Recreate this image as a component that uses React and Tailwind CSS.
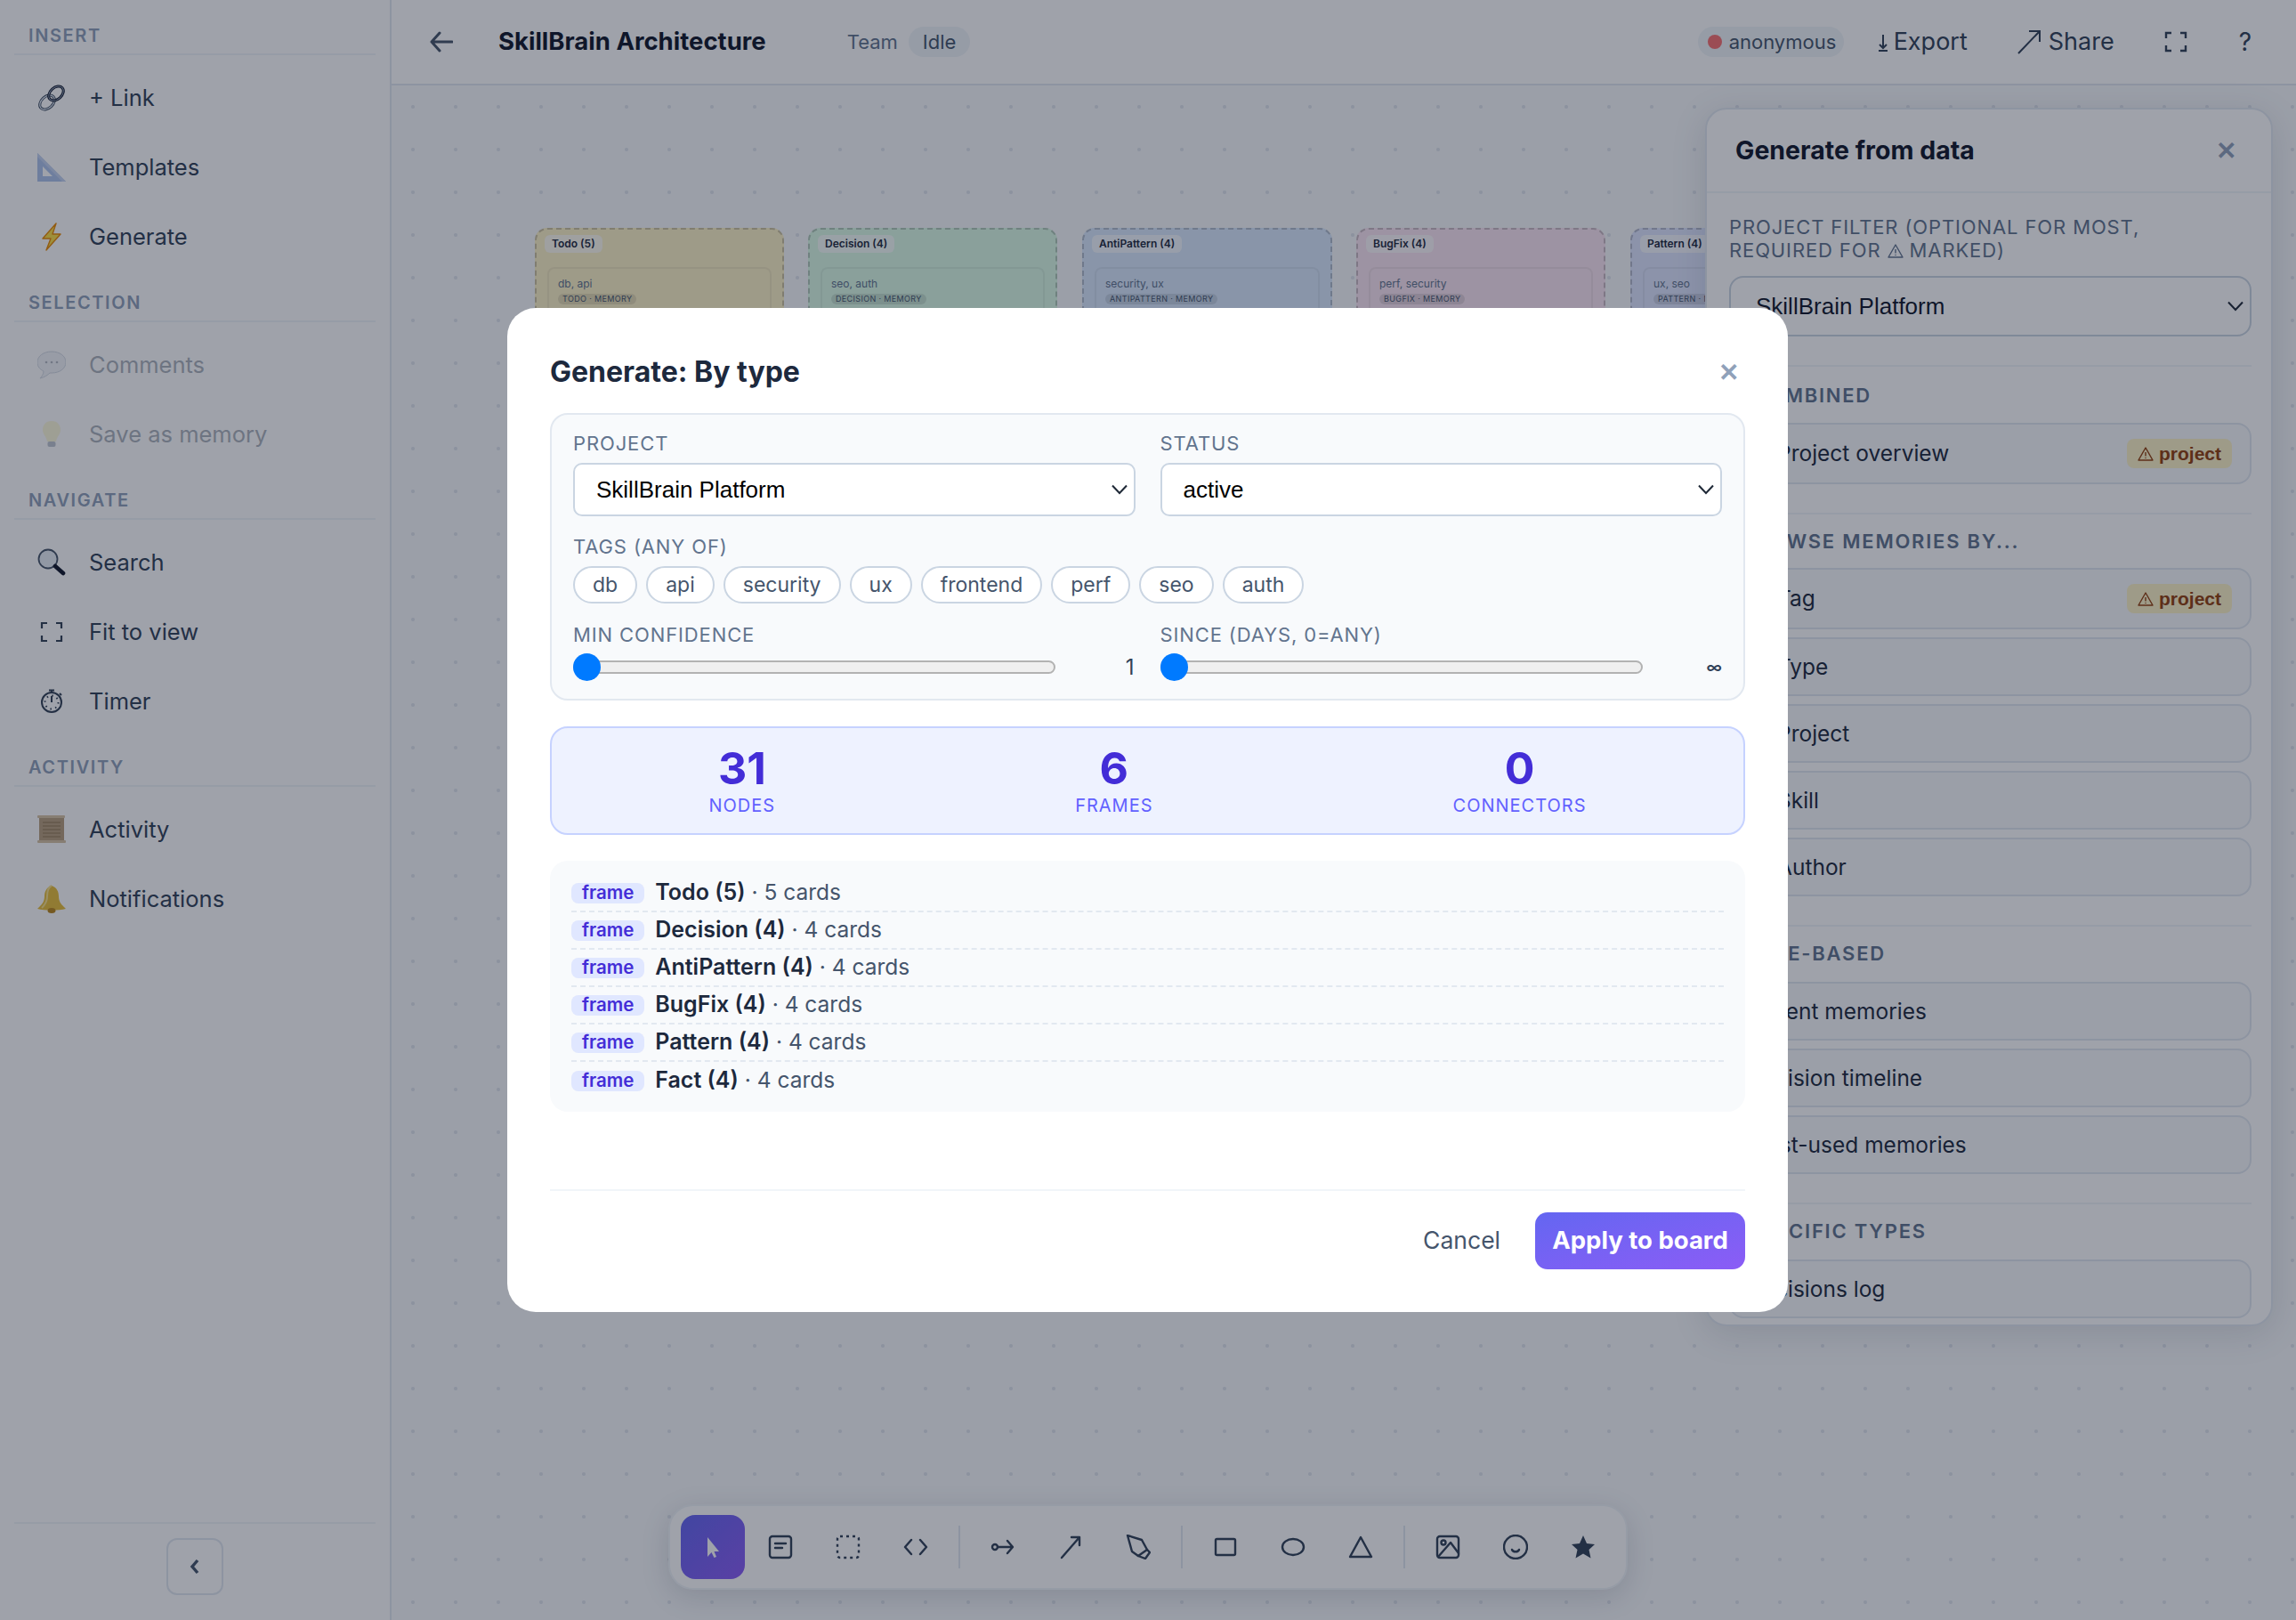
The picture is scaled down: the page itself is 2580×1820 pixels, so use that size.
import { useState } from 'react'

const Stroke = ({ children, size = 28 }) => (
  <svg width={size} height={size} viewBox="0 0 28 28" fill="none" stroke="currentColor" strokeWidth="2.4" strokeLinecap="round" strokeLinejoin="round">
    {children}
  </svg>
)

const LinkEmoji = () => (
  <svg width="32" height="32" viewBox="0 0 32 32" fill="none">
    <ellipse cx="11" cy="21" rx="9.5" ry="6.5" transform="rotate(-42 11 21)" stroke="#334155" strokeWidth="3" />
    <ellipse cx="11" cy="21" rx="9.5" ry="6.5" transform="rotate(-42 11 21)" stroke="#dbe4ee" strokeWidth="1.4" />
    <ellipse cx="21" cy="11" rx="9.5" ry="6.5" transform="rotate(-42 21 11)" stroke="#0f172a" strokeWidth="3" />
    <ellipse cx="21" cy="11" rx="9.5" ry="6.5" transform="rotate(-42 21 11)" stroke="#94a3b8" strokeWidth="1" />
  </svg>
)
const RulerEmoji = () => (
  <svg width="32" height="32" viewBox="0 0 32 32">
    <path fillRule="evenodd" d="M0 0L32 32H0Z M6 15V26H17Z" fill="#aec4ec" />
    <path d="M0 0L32 32H28L0 4Z" fill="#c3d3f0" />
  </svg>
)
const BoltEmoji = () => (
  <svg width="32" height="32" viewBox="0 0 32 32">
    <path d="M21 1L6 18H15L10 31L26 13H17Z" fill="#fde047" stroke="#ea8a04" strokeWidth="1.4" strokeLinejoin="round" />
  </svg>
)
const BubbleEmoji = () => (
  <svg width="32" height="32" viewBox="0 0 32 32">
    <path d="M16 1C7 1 0 6 0 13C0 18 3 21 7 23C7 26 5 29 3 31C8 30 12 27 14 25H16C25 25 32 20 32 13C32 6 25 1 16 1Z" fill="#e2e8f0" stroke="#94a3b8" strokeWidth="1" />
    <circle cx="10" cy="13" r="1.3" fill="#475569" />
    <circle cx="16" cy="13" r="1.3" fill="#475569" />
    <circle cx="22" cy="13" r="1.3" fill="#475569" />
  </svg>
)
const BulbEmoji = () => (
  <svg width="32" height="32" viewBox="0 0 32 32">
    <path d="M16 1C9 1 6 6 6 11C6 16 10 18 11 24H21C22 18 26 16 26 11C26 6 23 1 16 1Z" fill="#fef3a8" />
    <rect x="11.5" y="24" width="9" height="6" rx="2" fill="#64748b" />
  </svg>
)
const SearchEmoji = () => (
  <svg width="32" height="32" viewBox="0 0 32 32" fill="none">
    <circle cx="12" cy="12" r="10.5" fill="#e8eef5" stroke="#475569" strokeWidth="1.8" />
    <path d="M20 20L29 28" stroke="#0f172a" strokeWidth="4.6" strokeLinecap="round" />
  </svg>
)
const FitIcon = () => (
  <svg width="32" height="32" viewBox="0 0 32 32" fill="none" stroke="#334155" strokeWidth="2.2">
    <path d="M11 6H5V12M21 6H27V12M5 20V26H11M27 20V26H21" />
  </svg>
)
const TimerEmoji = () => (
  <svg width="32" height="32" viewBox="0 0 32 32" fill="none" stroke="#334155" strokeWidth="2">
    <circle cx="16" cy="17" r="11" />
    <path d="M16 4V6M13 3.5H19M25 7L27 9" />
    <path d="M16 10V17" />
    <circle cx="16" cy="17" r="7.5" strokeDasharray="1.5 4.4" />
  </svg>
)
const ScrollEmoji = () => (
  <svg width="32" height="32" viewBox="0 0 32 32">
    <rect x="2" y="2" width="28" height="28" fill="#b79f7d" />
    <rect x="0" y="0" width="31" height="3" rx="1" fill="#d8c4a4" />
    <rect x="0" y="28" width="32" height="3" rx="1" fill="#d8c4a4" />
    <path d="M6 8H26M6 12H26M6 16H26M6 20H26M6 24H26" stroke="#8f7654" strokeWidth="1" />
  </svg>
)
const BellEmoji = () => (
  <svg width="32" height="32" viewBox="0 0 32 32">
    <path d="M16 1C10 3 8 8 8 13C8 20 4 23 0 27C8 29 24 29 32 27C28 23 24 20 24 13C24 8 22 3 16 1Z" fill="#e8bf3a" />
    <path d="M16 1C12 3 11 8 11 13C11 19 8 23 5 26" stroke="#f7e08a" strokeWidth="2" fill="none" />
    <ellipse cx="16" cy="29" rx="4.5" ry="3" fill="#b9861c" />
  </svg>
)
const Warn = ({ size = 18 }) => (
  <svg className="inline-block align-[-2px]" width={size} height={size} viewBox="0 0 18 18" fill="none" stroke="currentColor" strokeWidth="1.4" strokeLinejoin="round">
    <path d="M9 2L17 16H1Z" />
    <path d="M9 7V11.5M9 13V14" />
  </svg>
)

const sections = [
  { label: 'Insert', items: [[LinkEmoji, '+ Link'], [RulerEmoji, 'Templates'], [BoltEmoji, 'Generate']] },
  { label: 'Selection', muted: true, items: [[BubbleEmoji, 'Comments'], [BulbEmoji, 'Save as memory']] },
  { label: 'Navigate', items: [[SearchEmoji, 'Search'], [FitIcon, 'Fit to view'], [TimerEmoji, 'Timer']] },
  { label: 'Activity', items: [[ScrollEmoji, 'Activity'], [BellEmoji, 'Notifications']] },
]

const frames = [
  { title: 'Todo (5)', tags: 'db, api', kind: 'TODO · MEMORY', box: 'left-[161px] w-[280px] bg-[#fef3c7]' },
  { title: 'Decision (4)', tags: 'seo, auth', kind: 'DECISION · MEMORY', box: 'left-[468px] w-[280px] bg-[#dcfce7]' },
  { title: 'AntiPattern (4)', tags: 'security, ux', kind: 'ANTIPATTERN · MEMORY', box: 'left-[776px] w-[281px] bg-[#dbeafe]' },
  { title: 'BugFix (4)', tags: 'perf, security', kind: 'BUGFIX · MEMORY', box: 'left-[1084px] w-[280px] bg-[#fce7f3]' },
  { title: 'Pattern (4)', tags: 'ux, seo', kind: 'PATTERN · MEMORY', box: 'left-[1392px] w-[280px] bg-[#e0e7ff]' },
]

const tags = ['db', 'api', 'security', 'ux', 'frontend', 'perf', 'seo', 'auth']

const planned = [
  ['Todo (5)', '5 cards'],
  ['Decision (4)', '4 cards'],
  ['AntiPattern (4)', '4 cards'],
  ['BugFix (4)', '4 cards'],
  ['Pattern (4)', '4 cards'],
  ['Fact (4)', '4 cards'],
]

const Chevron = () => (
  <svg className="absolute right-[8px] top-1/2 -translate-y-1/2 pointer-events-none" width="20" height="12" viewBox="0 0 20 12" fill="none" stroke="#1f2937" strokeWidth="2">
    <path d="M2 1.5L10 10L18 1.5" />
  </svg>
)

function Slider({ value, small }) {
  return (
    <div className="flex items-center h-[31px]">
      <div className="relative w-[542px] h-[31px] flex items-center">
        <div className="w-full h-[15px] rounded-full bg-[#efefef] border-2 border-[#b2b2b2]" />
        <div className="absolute left-0 top-0 w-[31px] h-[31px] rounded-full bg-[#007aff]" />
      </div>
      <span className={`flex-1 text-right text-slate-700 ${small ? 'text-[18px] font-semibold' : 'text-[24px] pr-[1px]'}`}>{value}</span>
    </div>
  )
}

function PanelRow({ children, badge, plain }) {
  return (
    <div className={`flex items-center justify-between pr-[20px] rounded-[16px] border-2 border-slate-200 bg-slate-50 text-[24.5px] text-slate-800 ${plain ? 'pl-[18px]' : 'pl-[52px]'} ${badge ? 'h-[69px]' : 'h-[66px]'}`}>
      <span>{children}</span>
      {badge && (
        <span className="flex items-center gap-[6px] h-[33px] px-[12px] rounded-[8px] bg-[#fef3c7] text-[#92400e] text-[21px] font-bold font-['Liberation_Sans',sans-serif]">
          <Warn />project
        </span>
      )}
    </div>
  )
}

const PanelLabel = ({ children, inset }) => (
  <div className={`h-[24px] leading-[24px] text-[22px] font-semibold tracking-[0.08em] uppercase text-slate-500 ${inset}`}>{children}</div>
)

export default function App() {
  const [active] = useState('select')

  return (
    <div className="relative w-full h-screen overflow-hidden bg-white font-['Inter',sans-serif]">
      <div className="flex h-full">
        <aside className="w-[440px] flex-shrink-0 flex flex-col px-4 pt-[5px] bg-white border-r-2 border-slate-200">
          {sections.map(sec => (
            <div key={sec.label} className="pt-[23px]">
              <div className="h-[34px] pl-4 pb-[8px] leading-[24px] text-[20px] font-semibold tracking-[0.08em] uppercase text-slate-400 border-b-2 border-slate-100">{sec.label}</div>
              <div className="mt-[9px] flex flex-col">
                {sec.items.map(([Icon, label]) => (
                  <div key={label} className={`h-[78px] flex items-center gap-[26px] pl-[26px] text-[25.5px] text-slate-700 ${sec.muted ? 'opacity-40' : ''}`}>
                    <span className="w-[32px] h-[32px] flex items-center justify-center"><Icon /></span>
                    {label}
                  </div>
                ))}
              </div>
            </div>
          ))}
          <div className="mt-auto border-t-2 border-slate-100 pt-[16px] pb-[28px] flex justify-center">
            <button className="w-[64px] h-[64px] rounded-[12px] border-2 border-slate-200 text-slate-600 flex items-center justify-center">
              <svg width="18" height="20" viewBox="0 0 18 20" fill="none" stroke="currentColor" strokeWidth="3.4">
                <path d="M12 3L6 10L12 17" />
              </svg>
            </button>
          </div>
        </aside>

        <main className="flex-1 flex flex-col min-w-0">
          <header className="h-[96px] flex-shrink-0 flex items-center pl-[43px] pr-[50px] bg-white border-b-2 border-slate-200">
            <svg width="26" height="24" viewBox="0 0 26 24" fill="none" stroke="#475569" strokeWidth="3" strokeLinecap="round" strokeLinejoin="round">
              <path d="M25 12H2M11 2L2 12L11 22" />
            </svg>
            <h1 className="ml-[51px] text-[27.5px] font-bold text-slate-900">SkillBrain Architecture</h1>
            <span className="ml-[91px] text-[22px] text-slate-500">Team</span>
            <span className="ml-[12px] h-[34px] px-[16px] flex items-center rounded-full bg-slate-100 text-[22px] text-slate-600">Idle</span>

            <span className="ml-auto h-[34px] w-[164px] pl-[11px] flex items-center gap-[8px] rounded-full bg-slate-100 text-[22px] text-slate-600">
              <span className="w-[16px] h-[16px] rounded-full bg-[#f87171]" />
              anonymous
            </span>
            <span className="ml-[37px] flex items-center gap-[5px] text-[27px] text-slate-700">
              <svg width="14" height="24" viewBox="0 0 14 24" fill="none" stroke="currentColor" strokeWidth="2">
                <path d="M7 4V19M3 15L7 19L11 15M2 22H12" />
              </svg>
              Export
            </span>
            <span className="ml-[55px] flex items-center gap-[8px] text-[27px] text-slate-700">
              <svg width="28" height="28" viewBox="0 0 28 28" fill="none" stroke="currentColor" strokeWidth="2">
                <path d="M2 27L26 2M14 2H26V14" />
              </svg>
              Share
            </span>
            <span className="ml-[56px] text-slate-700">
              <svg width="26" height="24" viewBox="0 0 26 24" fill="none" stroke="currentColor" strokeWidth="2.4">
                <path d="M8 2H2V8M18 2H24V8M2 16V22H8M24 16V22H18" />
              </svg>
            </span>
            <span className="ml-[58px] text-[28px] text-slate-700">?</span>
          </header>

          <div className="relative flex-1 bg-slate-50 bg-[radial-gradient(circle,#dfe4ec_1.5px,transparent_2.5px)] bg-[size:48px_48px]">
            {frames.map(f => (
              <div key={f.title} className={`absolute top-[160px] h-[420px] rounded-[14px] border-2 border-dashed border-black/20 ${f.box}`}>
                <div className="absolute left-[9px] top-[6px] h-[20px] px-[8px] rounded-[6px] bg-white/70 text-[12px] font-semibold leading-[20px] text-slate-800">{f.title}</div>
                <div className="absolute left-[12px] right-[12px] top-[42px] h-[92px] rounded-[8px] border-2 border-black/5 px-[10px] pt-[9px]">
                  <div className="text-[12px] leading-[16px] text-slate-500">{f.tags}</div>
                  <span className="block w-fit mt-[3px] px-[5px] h-[12px] rounded-full bg-black/10 text-[9px] tracking-[0.04em] leading-[12px] text-slate-600">{f.kind}</span>
                </div>
              </div>
            ))}

            <div className="absolute left-1/2 -ml-[220px] -translate-x-1/2 bottom-[34px] h-[96px] flex items-center gap-[4px] px-[12px] rounded-[28px] bg-white border-2 border-slate-100 shadow-[0_8px_32px_rgba(15,23,42,0.14)] text-slate-700">
              <button className={`w-[72px] h-[72px] rounded-[16px] flex items-center justify-center text-white bg-gradient-to-br from-[#6366f1] to-[#8b5cf6] ${active === 'select' ? '' : 'opacity-0'}`}>
                <svg width="28" height="28" viewBox="0 0 28 28" fill="#fff"><path d="M8 3V25L12.5 20L15.5 26L18 25L15.5 19H21Z" /></svg>
              </button>
              <button className="w-[72px] h-[72px] flex items-center justify-center"><Stroke><rect x="2" y="2" width="24" height="24" rx="3" /><path d="M8 10H20M8 15H16" /></Stroke></button>
              <button className="w-[72px] h-[72px] flex items-center justify-center"><Stroke><rect x="2" y="2" width="24" height="24" rx="3" strokeDasharray="3 4" strokeLinecap="butt" /></Stroke></button>
              <button className="w-[72px] h-[72px] flex items-center justify-center"><Stroke><path d="M9 6L2 14L9 22M19 6L26 14L19 22" /></Stroke></button>
              <span className="w-[2px] h-[48px] mx-[8px] bg-slate-200" />
              <button className="w-[72px] h-[72px] flex items-center justify-center"><Stroke><circle cx="5" cy="14" r="3" /><path d="M8 14H24M19 7L25 14L19 21" /></Stroke></button>
              <button className="w-[72px] h-[72px] flex items-center justify-center"><Stroke><path d="M4 26L24 3M15 3H24V12" /></Stroke></button>
              <button className="w-[72px] h-[72px] flex items-center justify-center"><Stroke><path d="M2 1L18 6L24 17L14 24L7 19Z" /><path d="M24 17L27 20L22 27L14 24" /></Stroke></button>
              <span className="w-[2px] h-[48px] mx-[8px] bg-slate-200" />
              <button className="w-[72px] h-[72px] flex items-center justify-center"><Stroke><rect x="3" y="5" width="22" height="18" rx="1.5" /></Stroke></button>
              <button className="w-[72px] h-[72px] flex items-center justify-center"><Stroke><ellipse cx="14" cy="14" rx="12" ry="9" /></Stroke></button>
              <button className="w-[72px] h-[72px] flex items-center justify-center"><Stroke><path d="M14 3L26 25H2Z" /></Stroke></button>
              <span className="w-[2px] h-[48px] mx-[8px] bg-slate-200" />
              <button className="w-[72px] h-[72px] flex items-center justify-center"><Stroke><rect x="2" y="2" width="24" height="24" rx="3" /><circle cx="9" cy="9" r="2.5" /><path d="M3 25L17 9L26 21" /></Stroke></button>
              <button className="w-[72px] h-[72px] flex items-center justify-center"><Stroke><circle cx="14" cy="14" r="13" /><path d="M10 17C11 20 17 20 18 17" /></Stroke></button>
              <button className="w-[72px] h-[72px] flex items-center justify-center">
                <svg width="28" height="28" viewBox="0 0 28 28" fill="currentColor"><path d="M14 1L18 10L27 11L20.5 17L22.5 26.5L14 21.5L5.5 26.5L7.5 17L1 11L10 10Z" /></svg>
              </button>
            </div>

            <section className="absolute right-[26px] top-[25px] w-[638px] h-[1369px] overflow-hidden rounded-[24px] bg-white border-2 border-slate-200 shadow-[0_8px_40px_rgba(15,23,42,0.12)]">
              <div className="h-[94px] flex items-center justify-between pl-[32px] pr-[39px] border-b-2 border-slate-100">
                <h2 className="text-[28.5px] font-bold text-slate-900">Generate from data</h2>
                <span className="text-[28px] font-bold text-slate-400">✕</span>
              </div>
              <div className="pl-[25px] pr-[22px]">
                <div className="mt-[25px] text-[22px] leading-[26px] tracking-[0.04em] text-slate-500">PROJECT FILTER (OPTIONAL FOR MOST,<br />REQUIRED FOR <Warn /> MARKED)</div>
                <div className="relative mt-[16px]">
                  <select defaultValue="SkillBrain Platform" className="appearance-none w-full h-[68px] pl-[28px] rounded-[16px] border-2 border-slate-300 bg-white text-[26px] text-slate-900 font-['Liberation_Sans',sans-serif]">
                    <option>SkillBrain Platform</option>
                  </select>
                  <Chevron />
                </div>
                <div className="mt-[32px] border-t-2 border-slate-100 pt-[20px]">
                  <PanelLabel inset="pl-[26px]">Combined</PanelLabel>
                  <div className="mt-[19px]"><PanelRow badge>Project overview</PanelRow></div>
                </div>
                <div className="mt-[32px] border-t-2 border-slate-100 pt-[18px]">
                  <PanelLabel inset="pl-[14px]">Browse memories by...</PanelLabel>
                  <div className="mt-[18px] flex flex-col gap-[9px]">
                    <PanelRow badge>Tag</PanelRow>
                    <PanelRow>Type</PanelRow>
                    <PanelRow>Project</PanelRow>
                    <PanelRow>Skill</PanelRow>
                    <PanelRow>Author</PanelRow>
                  </div>
                </div>
                <div className="mt-[32px] border-t-2 border-slate-100 pt-[18px]">
                  <PanelLabel inset="pl-[20px]">Time-based</PanelLabel>
                  <div className="mt-[20px] flex flex-col gap-[9px]">
                    <PanelRow plain>Recent memories</PanelRow>
                    <PanelRow plain>Decision timeline</PanelRow>
                    <PanelRow plain>Most-used memories</PanelRow>
                  </div>
                </div>
                <div className="mt-[32px] border-t-2 border-slate-100 pt-[18px]">
                  <PanelLabel inset="pl-[20px]">Specific types</PanelLabel>
                  <div className="mt-[20px] flex flex-col gap-[9px]">
                    <PanelRow plain>Decisions log</PanelRow>
                  </div>
                </div>
              </div>
            </section>
          </div>
        </main>
      </div>

      <div className="absolute inset-0 bg-[rgba(15,23,42,0.4)]" />

      <div className="absolute left-[570px] top-[346px] w-[1439px] h-[1128px] flex flex-col rounded-[32px] bg-white px-[48px] pt-[52px] pb-[48px]">
        <div className="h-[40px] flex items-center justify-between">
          <h2 className="text-[32px] font-bold text-slate-800">Generate: By type</h2>
          <span className="mr-[7px] text-[28px] font-bold text-slate-400">✕</span>
        </div>

        <div className="mt-[26px] rounded-[20px] border-2 border-slate-200 bg-slate-50 px-[24px] pt-[19px] pb-[20px]">
          <div className="grid grid-cols-2 gap-x-[28px]">
            <div>
              <div className="h-[26px] leading-[26px] text-[22px] tracking-[0.04em] text-slate-500">PROJECT</div>
              <div className="relative mt-[9px]">
                <select defaultValue="SkillBrain Platform" className="appearance-none w-full h-[60px] pl-[24px] rounded-[10px] border-2 border-slate-300 bg-white text-[26px] text-black font-['Liberation_Sans',sans-serif]">
                  <option>SkillBrain Platform</option>
                </select>
                <Chevron />
              </div>
            </div>
            <div>
              <div className="h-[26px] leading-[26px] text-[22px] tracking-[0.04em] text-slate-500">STATUS</div>
              <div className="relative mt-[9px]">
                <select defaultValue="active" className="appearance-none w-full h-[60px] pl-[24px] rounded-[10px] border-2 border-slate-300 bg-white text-[26px] text-black font-['Liberation_Sans',sans-serif]">
                  <option>active</option>
                </select>
                <Chevron />
              </div>
            </div>
          </div>

          <div className="mt-[21px] h-[26px] leading-[26px] text-[22px] tracking-[0.04em] text-slate-500">TAGS (ANY OF)</div>
          <div className="mt-[9px] flex gap-[10px]">
            {tags.map(t => (
              <span key={t} className="h-[42px] px-[20px] flex items-center rounded-full border-2 border-slate-300 bg-white text-[23px] text-slate-600">{t}</span>
            ))}
          </div>

          <div className="mt-[22px] grid grid-cols-2 gap-x-[28px]">
            <div>
              <div className="h-[26px] leading-[26px] text-[22px] tracking-[0.04em] text-slate-500">MIN CONFIDENCE</div>
              <div className="mt-[8px]"><Slider value="1" /></div>
            </div>
            <div>
              <div className="h-[26px] leading-[26px] text-[22px] tracking-[0.04em] text-slate-500">SINCE (DAYS, 0=ANY)</div>
              <div className="mt-[8px]"><Slider value="∞" small /></div>
            </div>
          </div>
        </div>

        <div className="mt-[29px] h-[122px] flex items-center justify-around px-[8px] rounded-[20px] border-2 border-indigo-200 bg-indigo-50">
          {[['31', 'NODES'], ['6', 'FRAMES'], ['0', 'CONNECTORS']].map(([n, l]) => (
            <div key={l} className="flex flex-col items-center">
              <span className="text-[50px] leading-[56px] font-bold text-indigo-700">{n}</span>
              <span className="text-[20px] leading-[28px] tracking-[0.05em] text-indigo-500">{l}</span>
            </div>
          ))}
        </div>

        <div className="mt-[29px] h-[282px] rounded-[20px] bg-slate-50 px-[24px] pt-[16px]">
          {planned.map(([name, count], i) => (
            <div key={name} className={`h-[42px] flex items-center gap-[12px] text-[24.5px] text-slate-600 ${i < planned.length - 1 ? 'border-b-2 border-dashed border-slate-200' : ''}`}>
              <span className="h-[23px] px-[12px] flex items-center rounded-[8px] bg-indigo-100 text-[20.5px] font-semibold text-indigo-700">frame</span>
              <span><b className="text-[25px] font-semibold text-slate-800">{name}</b> · {count}</span>
            </div>
          ))}
        </div>

        <div className="mt-auto border-t-2 border-slate-100 pt-[24px] flex items-center justify-end gap-[39px]">
          <button className="text-[26.5px] text-slate-600">Cancel</button>
          <button className="h-[64px] w-[236px] rounded-[14px] bg-gradient-to-br from-[#6366f1] to-[#8b5cf6] text-[27.5px] font-bold text-white">Apply to board</button>
        </div>
      </div>
    </div>
  )
}
